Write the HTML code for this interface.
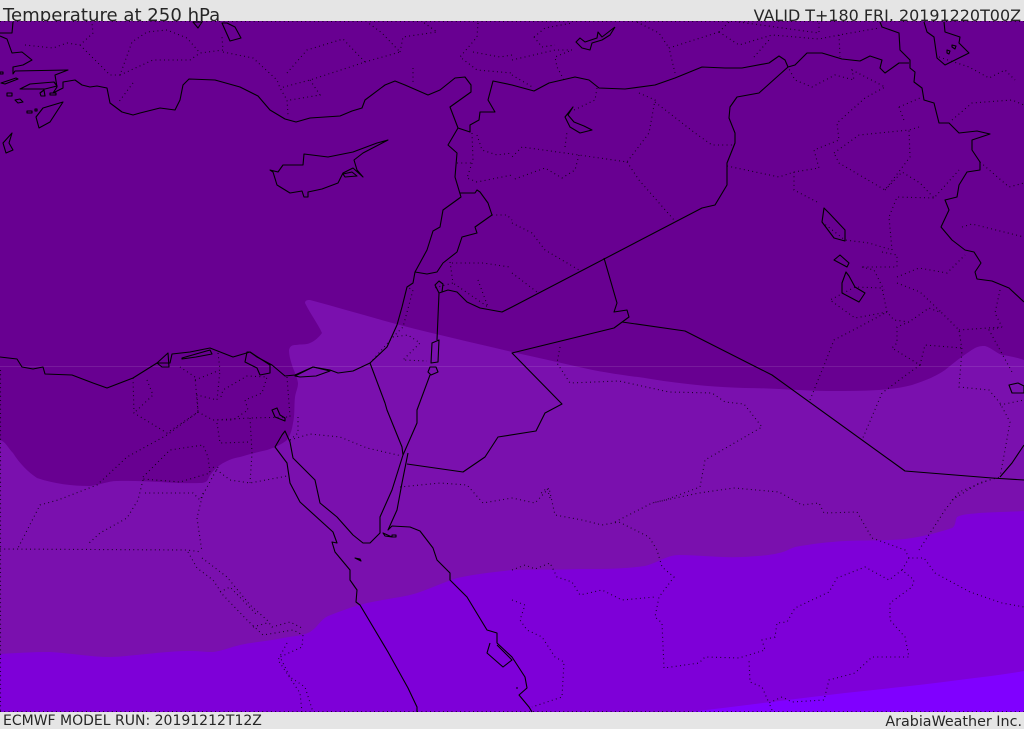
<!DOCTYPE html>
<html><head><meta charset="utf-8"><title>Temperature at 250 hPa</title>
<style>
html,body{margin:0;padding:0;background:#e5e5e5;width:1024px;height:729px;overflow:hidden}
svg{display:block}
text{font-family:"DejaVu Sans","Liberation Sans",sans-serif;fill:#262626}
.c{fill:none;stroke:#000;stroke-width:1.1;stroke-linejoin:round}
.d{fill:none;stroke:#000;stroke-width:1.1;stroke-dasharray:.9 3.4;opacity:.85}
</style></head><body>
<svg width="1024" height="729" viewBox="0 0 1024 729" xmlns="http://www.w3.org/2000/svg">
<rect width="1024" height="729" fill="#e5e5e5"/>
<text x="3" y="21" font-size="18.1">Temperature at 250 hPa</text>
<text x="1021" y="21" font-size="15.95" text-anchor="end">VALID T+180 FRI. 20191220T00Z</text>
<text x="3" y="725" font-size="14">ECMWF MODEL RUN: 20191212T12Z</text>
<text x="1022" y="726" font-size="14.3" text-anchor="end">ArabiaWeather Inc.</text>
<rect x="0" y="21" width="1024" height="691" fill="#680091"/>
<path fill="#7a10ae" d="M0,440 C6,442 8,448 13,453 C20,464 28,472 37,478 C55,484 72,486 90,486 C100,485 108,481 117,481 C145,480 175,484 200,483 C208,483 208,479 209,477 C212,472 216,468 220,465 C226,461 233,458 240,457 C250,454 258,452 267,450 C276,447 282,444 287,440 C291,434 292,429 293,423 C295,415 294,405 295,397 C296,391 298,388 298,383 C297,377 295,373 293,368 C291,362 289,356 289,350 C290,346 292,345 296,345 C301,344 306,345 310,343 C315,341 319,337 322,333 C318,324 311,315 305,303 C305,300 308,300 310,300 C340,308 370,317 400,325 C438,335 475,343 512,352 C535,357 557,362 579,367 C600,372 622,375 645,378 C680,384 712,387 745,388 C775,388 802,391 829,391 C846,391 862,391 879,390 C891,389 901,388 912,385 C924,381 935,377 945,370 C956,361 965,354 975,348 C979,346 982,346 985,346 C992,348 996,353 1002,355 C1010,356 1018,358 1024,360 L1024,712 L0,712 Z"/>
<path fill="#7e00d8" d="M0,654 C16,653 33,652 50,652 C70,653 90,657 110,657 C137,656 163,651 190,651 C198,651 205,652 213,652 C222,651 231,647 240,645 C254,642 269,641 283,638 C293,636 302,636 310,632 C318,627 320,620 328,616 C341,611 354,606 367,603 C381,600 396,598 410,595 C426,591 441,583 457,578 C475,574 494,572 512,570 C535,569 557,570 579,569 C601,569 623,569 645,566 C657,563 667,555 679,555 C700,555 721,558 742,557 C755,556 767,556 779,553 C785,552 789,549 795,547 C811,544 828,542 845,541 C865,540 885,541 905,539 C921,537 937,533 952,528 C956,526 955,520 957,517 C962,514 972,514 979,513 C994,512 1009,512 1024,511 L1024,712 L0,712 Z"/>
<path fill="#8000ff" d="M689,712 C741,706 793,699 845,693 C883,689 921,685 959,680 C981,677 1003,675 1024,671 L1024,712 Z"/>
<rect x="0" y="366" width="1024" height="1" fill="#fff" opacity=".1"/>

<g class="d">
<path d="M0,21.5H1024M0,711.5H1024M0.5,370V712"/>
<path d="M25,45L53,48L67,43L80,45L93,33L92,23M80,45L110,75L120,75L132,42L147,32L167,30L187,38L200,53L223,50L222,37M223,52L253,58L277,80L280,88L287,100L288,115M120,75L153,60L190,60L200,53M133,83L118,103"/>
<path d="M287,73L307,50L343,39L365,62L347,68L310,80L280,88M310,80L320,95L290,100M365,62L400,52L382,33L367,22M400,52L403,37L437,32L423,22M478,23L477,37L460,57L477,70L512,73M413,68L413,83M473,52L500,57L512,55"/>
<path d="M472,133L473,160L467,178L477,182L512,175M477,135L482,150L497,155L512,153M492,215L507,215L512,220M457,163L473,163"/>
<path d="M512,60L555,50L572,50L555,57L557,67L564,80M534,37L545,28L572,23M534,37L542,47L555,45M597,88L595,100L574,110M512,75L534,88M639,93L655,100L649,133L627,162L579,155L522,147L512,157M655,102L695,133L712,145L735,145M579,155L575,170L562,178L545,168L512,180M627,162L639,180L674,220M565,147L567,132M512,223L532,233L545,250L579,270M512,273L537,292"/>
<path d="M727,166L779,177L794,172L819,168L814,150L839,140L837,123L865,98L885,87L852,70L854,80L835,75L812,87L795,80L788,67M794,172L794,190L819,203M834,153L859,135L909,130L910,157L885,190L839,163L834,153M919,127L909,130M899,107L920,98M899,107L905,123M885,190L902,172L920,183L934,198L959,170M892,250L889,217L897,197L934,198M952,120L972,103L1012,100L1024,105M939,57L969,67L989,78L1005,70L1015,80M980,162L1009,187L1024,183M962,227L972,224L1024,237M822,222L845,240L869,243L892,250M719,32L669,48L675,73M719,32L739,45L772,35L819,39L839,35L879,28M719,32L729,22M739,22L819,33L819,23M839,35L840,57M754,57L769,40M637,22L659,33L669,48"/>
<path d="M370,363L393,337L403,327L413,290L407,287M393,337L408,335L420,343L403,360L427,361M450,262L453,283L434,288M452,263L483,263L510,267M478,280L488,307L453,283"/>
<path d="M133,378L134,413L167,433L198,412L195,377L180,367M147,380L153,395L134,413M195,380L220,370L217,400L197,395L198,412L213,420L233,420L248,410L245,400L262,393L267,377L247,376L223,390L220,400M218,353L220,370M287,377L290,417L250,418L213,420M298,417L298,433L290,440M250,418L252,453L250,483M217,423L220,443L250,442"/>
<path d="M198,412L167,435L127,457L97,485L58,500L40,505L18,548M143,477L170,450L203,445L208,457L210,473L180,482L143,479M143,480L138,500L127,518L100,533L87,545M218,467L200,500L193,493L142,493M213,467L230,480L250,483L287,476M290,440L310,434L340,437L367,448L402,456"/>
<path d="M203,493L197,518L202,552M0,549L187,550L202,552M188,552L197,568L213,580L223,595L247,620L263,635L293,630L303,635L302,647L280,657L290,677L305,687L313,712M202,558L227,577L250,605L267,620L272,627L290,622L302,628M220,592L230,587L257,615M253,627L267,623M287,643L278,660L290,678L300,693L302,712"/>
<path d="M560,347L557,363L570,383L619,381L669,392L712,393L725,402L744,404L762,427L705,460L700,487L665,500L652,503M550,498L547,488L539,495"/>
<path d="M810,400L825,363L834,340L859,327L887,312L855,318L830,300L855,287L882,288L887,312L894,320L909,322L929,308L942,313L959,330L962,350L959,387L989,390L1000,403L1010,422L1005,450L1000,477M1000,405L1024,400M909,322L897,327L897,343L892,348L920,365L925,345L962,348M920,365L902,378L882,393L862,440M959,330L1002,327L989,330L1012,372M1000,290L995,313L1002,327M897,283L920,292L942,313M897,277L919,268L947,273L965,255M862,267L874,270L884,290M882,252L897,255L897,267L862,267"/>
<path d="M400,487L440,483L467,485L483,503L512,498L535,503L549,488L555,515L582,520L602,525L619,522L649,537L657,550L662,567L674,577L659,597L655,617L662,623L664,668L699,663L705,657L739,658L765,650L762,640L775,637L777,623L787,622L795,608L829,592L837,578L865,567L889,580L902,570L914,580L912,587L890,603L890,620L905,637L909,657L872,657L855,673L829,680L824,700L792,702L782,697L769,703L762,687L750,682L749,660M772,710L769,703"/>
<path d="M615,522L652,503L699,493L734,488L779,492L802,505L819,503L824,513L857,512L872,538L905,550L909,558L924,558L935,573L970,592L1002,603L1024,607M909,558L902,570M919,550L945,510L959,492L989,480"/>
<path d="M512,570L525,565L535,569L550,563L557,577L572,582L580,595L602,590L622,600L655,597M512,600L525,605L520,620L527,630L542,637L555,657L564,662L562,697L532,707"/>
<path d="M952,500L979,483L1000,477"/>
</g>

<g class="c">
<path d="M13,22L12,33L0,33M0,36L7,39L12,53L22,52L32,60L23,65L13,67L13,74L15,71L68,70L55,75L57,87L53,93L63,88L63,82L75,80L82,85L90,87L97,86L107,88L110,103L122,112L133,115L140,113L160,108L175,110L180,100L183,85L189,79L215,80L240,87L258,96L270,110L285,119L296,122L310,118L340,116L352,111L362,108L365,100L385,85L395,81L405,85L428,95L440,90L445,86L455,78L465,77L471,85L471,92L450,107L458,128L448,145L457,153L455,177L461,197L443,210L440,227L433,231L427,250L415,272L413,283L407,287L402,307L397,325L387,347L370,363L353,371L338,373L330,370L313,367L295,375L285,376L272,365L257,357L250,352L233,357L210,348L190,352L172,354L170,363L157,363L133,378L107,388L93,383L72,375L45,374L43,367L33,369L22,367L17,359L0,357"/>
<path d="M458,128L470,132L470,125L479,120L480,112L495,112L488,100L493,81L512,85L534,91L549,83L575,77L589,80L599,88L625,89L655,85L675,78L702,67L725,68L742,68L769,63L779,56L785,60L788,67L795,65L807,53L822,53L842,59L860,61L870,56L882,60L880,68L885,73L899,63L909,63"/>
<path d="M880,22L882,27L899,33L900,50L910,60L910,68L915,72L914,82L922,88L924,100L934,103L939,123L949,123L959,133L977,131L990,134L972,140L972,150L980,162L980,170L967,172L959,185L957,197L945,200L949,210L941,227L952,240L965,250L974,252L981,263L975,272L977,279L992,281L1009,288L1024,302"/>
<path d="M924,22L927,32L934,37L937,58L945,65L955,60L969,53L959,43L960,37L945,32L944,22M947,50l3,1l-1,3l-2,-1zM952,45l4,1l-1,3l-3,-2z"/>
<path d="M788,67L759,93L737,97L730,107L729,118L735,133L735,143L727,163L727,185L715,205L702,208L512,307L502,312L480,308L467,302L457,292L448,290L439,293L437,340M439,293L435,285L439,281L443,284L442,292"/>
<path d="M415,272L427,274L437,272L443,263L457,252L462,237L477,233L475,227L492,215L488,203L480,192L477,190L475,193L460,193"/>
<path d="M432,343L439,340L438,362L431,363ZM430,367L436,367L438,372L431,375L428,372ZM430,375L417,410L417,423L403,455L392,490L380,517L380,533L370,543L363,543L353,535L337,517L320,503L315,480L293,458L290,442L285,431L282,435L275,447L287,463L290,483L300,502L333,532L337,543L332,542L335,552L350,570L350,580L357,590L356,602L360,605L388,652L408,688L417,707L417,712"/>
<path d="M408,453L402,483L397,510L388,530L392,526L410,527L420,531L433,548L437,560L450,573L450,580L467,597L487,630L497,633L497,643L512,657L525,677L527,688L519,695L529,707L532,712M490,643L487,653L503,667L512,660L497,645M516,688h2"/>
<path d="M604,258L617,303L614,312L627,310L629,317L614,328L512,353L562,404L545,413L536,431L498,437L485,457L463,472L407,464"/>
<path d="M622,322L685,331L772,375L905,471L992,478L1024,480M1000,477L1012,463L1024,445M370,363L385,403L387,410L402,447L403,455"/>
<path d="M270,170L273,172L277,185L290,193L302,191L304,197L308,197L308,192L322,189L338,183L343,173L353,168L363,177L357,170L354,160L363,153L388,140L377,143L353,152L328,157L304,154L303,165L283,165L278,172ZM343,174L352,172L357,176L345,177Z"/>
<path d="M63,102L43,108L36,117L39,128L50,122ZM12,133L3,143L6,153L13,150L9,143ZM1,83L16,78L18,79L5,84ZM20,89L30,84L54,82L57,86L45,89L22,89ZM40,93L44,90L45,96L41,96ZM7,93H12V96H7ZM15,100L20,99L23,102L18,103ZM27,111H32V113H27ZM50,93H56V95H50ZM0,72h3v2H0ZM35,109l2,0l0,2l-2,0ZM193,22L198,28L202,22ZM222,23L230,41L241,38L235,27L227,23Z"/>
<path d="M615,27L610,35L602,40L592,43L590,50L582,48L576,42L580,38L585,42L597,38L598,32L602,37L615,27M573,107L565,117L570,127L580,133L592,130L584,126L574,122L568,115L573,107ZM824,208L822,222L834,238L845,241L845,230L829,213ZM834,260L840,255L849,263L847,267ZM846,272L842,283L842,293L859,302L865,293L855,287L849,276Z"/>
<path d="M272,410L277,408L280,415L285,418L285,421L275,417ZM182,358L210,350L212,354L196,357L182,359ZM295,376L313,367L330,371L316,376L300,377ZM247,352L245,362L257,368L260,375L270,373L270,365L250,352ZM157,363L168,353L169,367L162,367ZM1009,385L1018,383L1024,386L1024,393L1012,393ZM383,533L392,537L385,536ZM392,535h4v2h-4ZM355,558L361,561L360,559Z"/>
</g>
</svg>
</body></html>
